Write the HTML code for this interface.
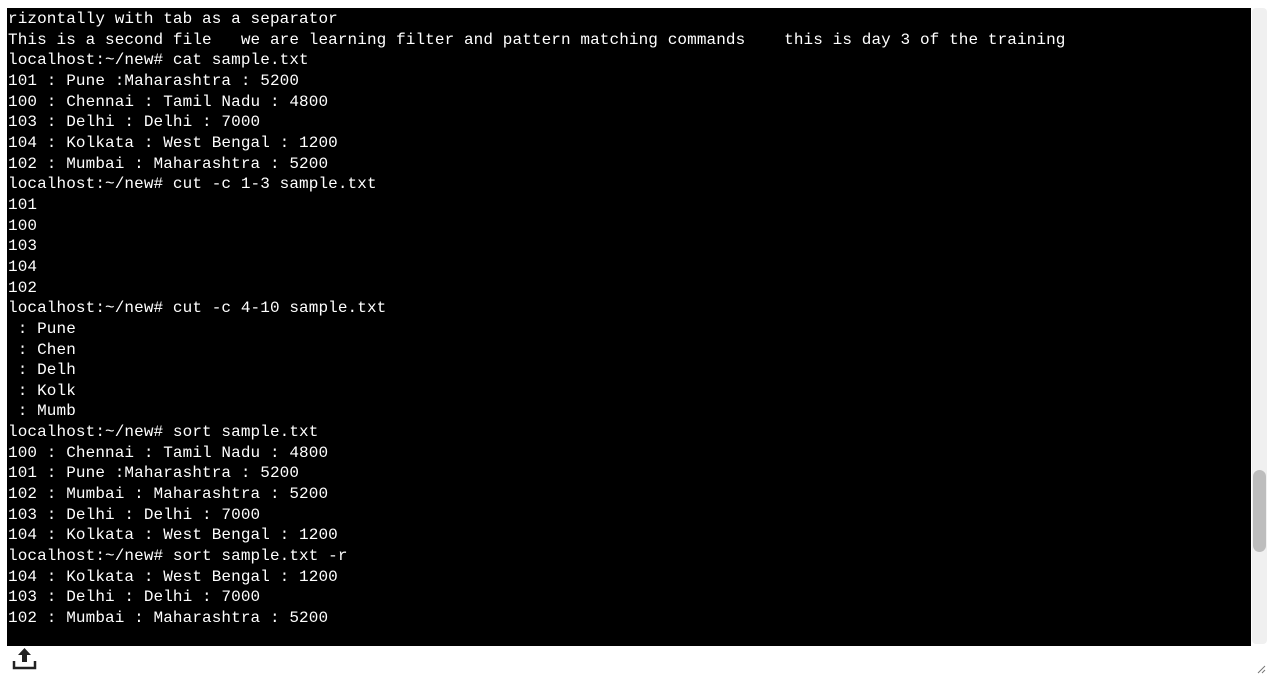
<!DOCTYPE html>
<html><head><style>
body{margin:0;width:1280px;height:687px;background:#fff;position:relative;overflow:hidden}
#t{position:absolute;left:7px;top:8px;width:1244px;height:638px;background:#000;overflow:hidden}
pre{margin:0;padding:0 0 0 1px;color:#fff;font-family:"Liberation Mono",monospace;font-size:16px;letter-spacing:0.1px;line-height:20.65px;position:absolute;top:1px;left:0;tab-size:8}
#sb{position:absolute;left:1252px;top:8px;width:15px;height:636px;background:#f0f0f0;border-radius:4px}
#th{position:absolute;left:1253px;top:470px;width:13px;height:82px;background:#bdbdbd;border-radius:7px}
</style></head><body>
<div id="t"><pre>rizontally with tab as a separator
This is a second file	we are learning filter and pattern matching commands	this is day 3 of the training
localhost:~/new# cat sample.txt
101 : Pune :Maharashtra : 5200
100 : Chennai : Tamil Nadu : 4800
103 : Delhi : Delhi : 7000
104 : Kolkata : West Bengal : 1200
102 : Mumbai : Maharashtra : 5200
localhost:~/new# cut -c 1-3 sample.txt
101
100
103
104
102
localhost:~/new# cut -c 4-10 sample.txt
 : Pune
 : Chen
 : Delh
 : Kolk
 : Mumb
localhost:~/new# sort sample.txt
100 : Chennai : Tamil Nadu : 4800
101 : Pune :Maharashtra : 5200
102 : Mumbai : Maharashtra : 5200
103 : Delhi : Delhi : 7000
104 : Kolkata : West Bengal : 1200
localhost:~/new# sort sample.txt -r
104 : Kolkata : West Bengal : 1200
103 : Delhi : Delhi : 7000
102 : Mumbai : Maharashtra : 5200</pre></div>
<div id="sb"></div><div id="th"></div>
<svg style="position:absolute;left:12px;top:647px" width="26" height="24" viewBox="0 0 26 24">
<path d="M12.5 1 L19 8 H15 V15 H10 V8 H6 Z" fill="#222"/>
<path d="M2 14 V21 H23 V14" fill="none" stroke="#222" stroke-width="2.5"/>
</svg>
<svg style="position:absolute;left:1256px;top:664px" width="10" height="10" viewBox="0 0 10 10">
<path d="M9 2 L2 9 M9 6 L6 9" stroke="#777" stroke-width="1"/>
</svg>
</body></html>
